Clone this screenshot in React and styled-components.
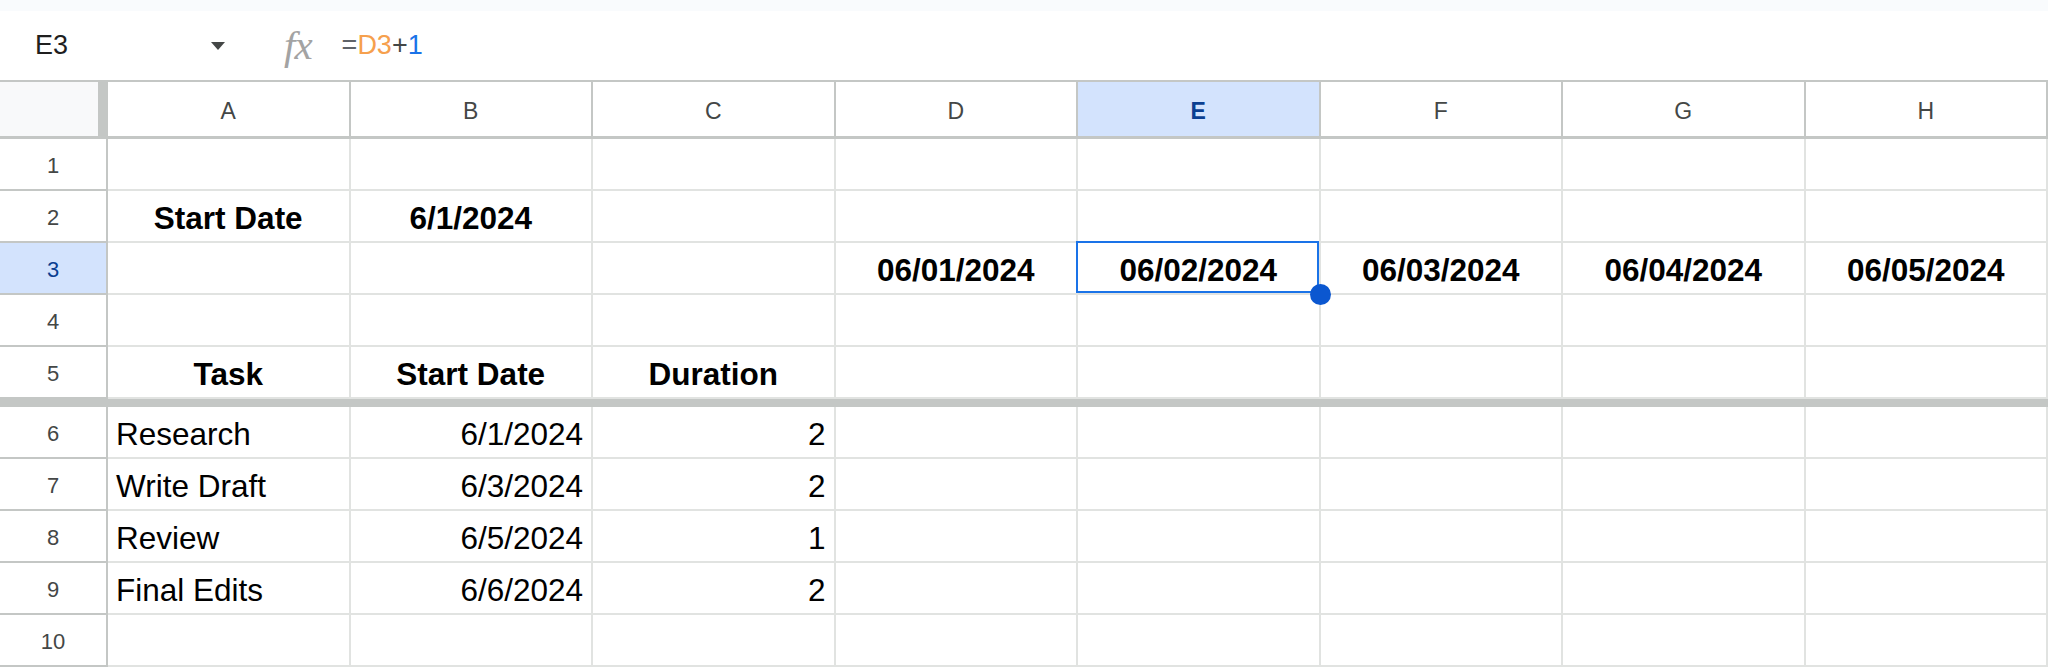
import React from "react";
import styled, { createGlobalStyle } from "styled-components";

const GlobalStyle = createGlobalStyle`
  html, body {
    margin: 0;
    padding: 0;
    background: #ffffff;
    overflow: hidden;
  }
  * {
    box-sizing: border-box;
  }
`;

const COL_W = 242.5;
const HEAD_W = 108;

const Page = styled.div`
  width: 2048px;
  height: 669px;
  font-family: "Liberation Sans", Arial, sans-serif;
  background: #ffffff;
  overflow: hidden;
`;

const TopStrip = styled.div`
  height: 11px;
  background: #f9fbfd;
`;

const FormulaBar = styled.div`
  height: 69px;
  display: flex;
  align-items: center;
  background: #ffffff;
`;

const NameBox = styled.div`
  width: 208px;
  padding-left: 35px;
  font-size: 27px;
  color: #1f1f1f;
`;

const DropArrow = styled.svg`
  width: 20px;
  height: 12px;
  display: block;
`;

const FxIcon = styled.span`
  margin-left: 56px;
  font-family: "Liberation Serif", "Times New Roman", serif;
  font-style: italic;
  font-size: 41px;
  line-height: 1;
  color: #a3a3a3;
  letter-spacing: -1px;
`;

const Formula = styled.div`
  margin-left: 30px;
  font-size: 27px;
  display: flex;
`;

const Token = styled.span`
  color: ${({ $c }) => $c};
`;

const Grid = styled.div`
  display: flex;
  flex-direction: column;
`;

const Row = styled.div`
  display: grid;
  grid-template-columns: ${HEAD_W}px repeat(8, ${COL_W}px);
  height: ${({ $h }) => $h}px;
`;

const Corner = styled.div`
  background: #f8f9fa;
  border-top: 2px solid #c4c7c5;
  border-right: 10px solid #c4c7c5;
  border-bottom: 3px solid #c4c7c5;
`;

const ColHead = styled.div`
  display: flex;
  align-items: center;
  justify-content: center;
  padding-top: 4px;
  font-size: 23px;
  background: ${({ $active }) => ($active ? "#d3e3fd" : "#ffffff")};
  color: ${({ $active }) => ($active ? "#0b3f91" : "#444746")};
  font-weight: ${({ $active }) => ($active ? 700 : 400)};
  border-top: 2px solid #c4c7c5;
  border-right: 2px solid #c4c7c5;
  border-bottom: 3px solid #c4c7c5;
`;

const RowNum = styled.div`
  display: flex;
  align-items: center;
  justify-content: center;
  padding-top: 3px;
  font-size: 22px;
  background: ${({ $active }) => ($active ? "#d3e3fd" : "#ffffff")};
  color: ${({ $active }) => ($active ? "#0b3f91" : "#444746")};
  border-right: 2px solid #c4c7c5;
  border-bottom: 2px solid #c4c7c5;
`;

const Cell = styled.div`
  position: relative;
  display: flex;
  align-items: center;
  justify-content: ${({ $align }) =>
    $align === "right" ? "flex-end" : $align === "left" ? "flex-start" : "center"};
  padding: 5px 8px 0 8px;
  font-size: 31.5px;
  font-weight: ${({ $bold }) => ($bold ? 700 : 400)};
  color: #000000;
  white-space: nowrap;
  border-right: 2px solid #e1e3e1;
  border-bottom: 2px solid #e1e3e1;
`;

const Selection = styled.div`
  position: absolute;
  top: -2px;
  left: -2px;
  right: 0;
  bottom: 0;
  border: 2px solid #1a73e8;
  z-index: 2;
  pointer-events: none;
`;

const Handle = styled.div`
  position: absolute;
  right: -14px;
  bottom: -14px;
  width: 21px;
  height: 21px;
  border-radius: 50%;
  background: #0b57d0;
`;

const FreezeBar = styled.div`
  height: 8px;
  background: #c4c7c5;
`;

const COLS = ["A", "B", "C", "D", "E", "F", "G", "H"];
const SEL = { col: "E", row: 3 };

const b = (v, align = "center") => ({ v, bold: true, align });
const t = (v, align) => ({ v, align });

const TOP_ROWS = [
  { n: 1, cells: {} },
  { n: 2, cells: { A: b("Start Date"), B: b("6/1/2024") } },
  {
    n: 3,
    cells: {
      D: b("06/01/2024"),
      E: b("06/02/2024"),
      F: b("06/03/2024"),
      G: b("06/04/2024"),
      H: b("06/05/2024"),
    },
  },
  { n: 4, cells: {} },
  { n: 5, cells: { A: b("Task"), B: b("Start Date"), C: b("Duration") } },
];

const BODY_ROWS = [
  { n: 6, cells: { A: t("Research", "left"), B: t("6/1/2024", "right"), C: t("2", "right") } },
  { n: 7, cells: { A: t("Write Draft", "left"), B: t("6/3/2024", "right"), C: t("2", "right") } },
  { n: 8, cells: { A: t("Review", "left"), B: t("6/5/2024", "right"), C: t("1", "right") } },
  { n: 9, cells: { A: t("Final Edits", "left"), B: t("6/6/2024", "right"), C: t("2", "right") } },
  { n: 10, cells: {} },
];

const SheetRow = ({ row }) => (
  <Row $h={52}>
    <RowNum $active={row.n === SEL.row}>{row.n}</RowNum>
    {COLS.map((c) => {
      const cell = row.cells[c];
      const selected = row.n === SEL.row && c === SEL.col;
      return (
        <Cell key={c} $align={cell?.align} $bold={cell?.bold}>
          {cell?.v}
          {selected && (
            <Selection>
              <Handle />
            </Selection>
          )}
        </Cell>
      );
    })}
  </Row>
);

const App = () => {
  return (
    <Page>
      <GlobalStyle />
      <TopStrip />
      <FormulaBar>
        <NameBox>E3</NameBox>
        <DropArrow viewBox="0 0 20 12">
          <polygon points="3,2 17,2 10,10" fill="#444746" />
        </DropArrow>
        <FxIcon>fx</FxIcon>
        <Formula>
          <Token $c="#5f6368">=</Token>
          <Token $c="#f6a04d">D3</Token>
          <Token $c="#444746">+</Token>
          <Token $c="#1a73e8">1</Token>
        </Formula>
      </FormulaBar>
      <Grid>
        <Row $h={59}>
          <Corner />
          {COLS.map((c) => (
            <ColHead key={c} $active={c === SEL.col}>
              {c}
            </ColHead>
          ))}
        </Row>
        {TOP_ROWS.map((r) => (
          <SheetRow key={r.n} row={r} />
        ))}
        <FreezeBar />
        {BODY_ROWS.map((r) => (
          <SheetRow key={r.n} row={r} />
        ))}
      </Grid>
    </Page>
  );
};

export default App;
